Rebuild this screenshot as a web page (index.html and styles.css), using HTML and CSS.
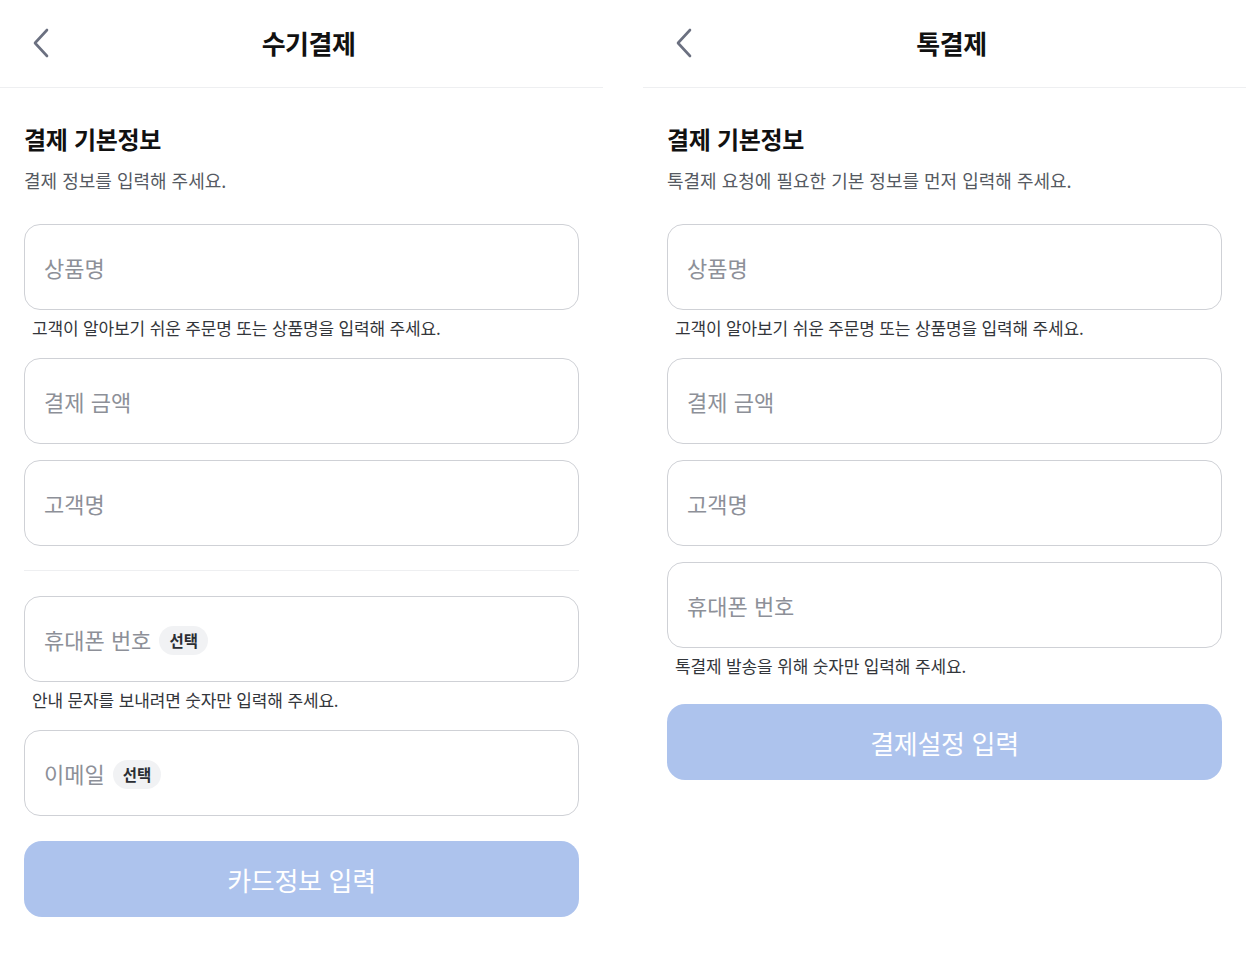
FILE: index.html
```html
<!DOCTYPE html>
<html lang="ko">
<head>
<meta charset="utf-8">
<title>결제</title>
<link rel="stylesheet" href="styles.css">
</head>
<body>
<div class="screens">
  <section class="screen">
    <header class="topbar">
      <button class="back" aria-label="뒤로">
        <svg width="20" height="30" viewBox="0 0 20 30"><path d="M16 2 L4 15 L16 28" fill="none" stroke="#6b7080" stroke-width="2.6" stroke-linecap="round" stroke-linejoin="round"/></svg>
      </button>
      <h1 class="title">수기결제</h1>
      <span></span>
    </header>
    <main class="content">
      <h2 class="sec-title">결제 기본정보</h2>
      <p class="sec-desc">결제 정보를 입력해 주세요.</p>
      <div class="form">
        <div class="field"><span class="ph">상품명</span></div>
        <p class="help">고객이 알아보기 쉬운 주문명 또는 상품명을 입력해 주세요.</p>
        <div class="field"><span class="ph">결제 금액</span></div>
        <div class="field"><span class="ph">고객명</span></div>
        <hr class="divider">
        <div class="field"><span class="ph">휴대폰 번호</span><span class="badge">선택</span></div>
        <p class="help">안내 문자를 보내려면 숫자만 입력해 주세요.</p>
        <div class="field"><span class="ph">이메일</span><span class="badge">선택</span></div>
        <button class="submit">카드정보 입력</button>
      </div>
    </main>
  </section>
  <section class="screen screen-right">
    <header class="topbar">
      <button class="back" aria-label="뒤로">
        <svg width="20" height="30" viewBox="0 0 20 30"><path d="M16 2 L4 15 L16 28" fill="none" stroke="#6b7080" stroke-width="2.6" stroke-linecap="round" stroke-linejoin="round"/></svg>
      </button>
      <h1 class="title">톡결제</h1>
      <span></span>
    </header>
    <main class="content">
      <h2 class="sec-title">결제 기본정보</h2>
      <p class="sec-desc">톡결제 요청에 필요한 기본 정보를 먼저 입력해 주세요.</p>
      <div class="form">
        <div class="field"><span class="ph">상품명</span></div>
        <p class="help">고객이 알아보기 쉬운 주문명 또는 상품명을 입력해 주세요.</p>
        <div class="field"><span class="ph">결제 금액</span></div>
        <div class="field"><span class="ph">고객명</span></div>
        <div class="field"><span class="ph">휴대폰 번호</span></div>
        <p class="help">톡결제 발송을 위해 숫자만 입력해 주세요.</p>
        <button class="submit">결제설정 입력</button>
      </div>
    </main>
  </section>
</div>
</body>
</html>
```

FILE: styles.css
```css
* { box-sizing: border-box; }
html, body {
  margin: 0;
  padding: 0;
  background: #fff;
  font-family: "Noto Sans CJK KR", "Noto Sans", sans-serif;
  color: #111;
}
.screens {
  display: flex;
  gap: 40px;
  width: 1246px;
}
.screen {
  width: 603px;
  flex: none;
}
.topbar {
  height: 88px;
  display: grid;
  grid-template-columns: 60px 1fr 46px;
  align-items: center;
  border-bottom: 1px solid #eeeff1;
}
.back {
  border: 0;
  background: none;
  padding: 0 0 0 31px;
  margin: 0;
  height: 30px;
  display: flex;
  align-items: center;
  cursor: pointer;
  position: relative;
  top: -1px;
}
.title {
  margin: 0;
  text-align: center;
  font-size: 26px;
  font-weight: 700;
  letter-spacing: -0.5px;
  color: #111;
  position: relative;
  top: -1px;
}
.content {
  padding: 0 24px;
}
.sec-title {
  margin: 34px 0 0;
  font-size: 24px;
  line-height: 34px;
  font-weight: 700;
  letter-spacing: -0.3px;
  color: #111;
}
.sec-desc {
  margin: 11px 0 0;
  font-size: 18px;
  line-height: 26px;
  color: #555a62;
}
.form {
  display: flex;
  flex-direction: column;
  margin-top: 31px;
}
.field {
  height: 86px;
  border: 1px solid #cfd1d6;
  border-radius: 16px;
  display: flex;
  align-items: center;
  padding: 0 19px;
  gap: 8px;
  margin-bottom: 16px;
}
.field:has(+ .help) { margin-bottom: 0; }
.ph {
  font-size: 22px;
  color: #8d9098;
}
.badge {
  display: inline-flex;
  align-items: center;
  height: 29px;
  padding: 0 10px;
  border-radius: 15px;
  background: #f1f2f4;
  color: #2b2e33;
  font-size: 15.5px;
  font-weight: 700;
  position: relative;
  top: 1px;
}
.help {
  margin: 6px 0 18px;
  padding-left: 8px;
  font-size: 17px;
  line-height: 24px;
  color: #33363b;
  letter-spacing: -0.15px;
}
.divider {
  border: 0;
  border-top: 1px solid #eeeff1;
  margin: 8px 0 25px;
  height: 0;
}
.submit {
  margin-top: 9px;
  height: 76px;
  border: 0;
  border-radius: 18px;
  background: #adc3ed;
  color: #fff;
  font-family: inherit;
  font-size: 26px;
  letter-spacing: -0.3px;
  cursor: pointer;
}
.help + .submit { margin-top: 8px; }
```
